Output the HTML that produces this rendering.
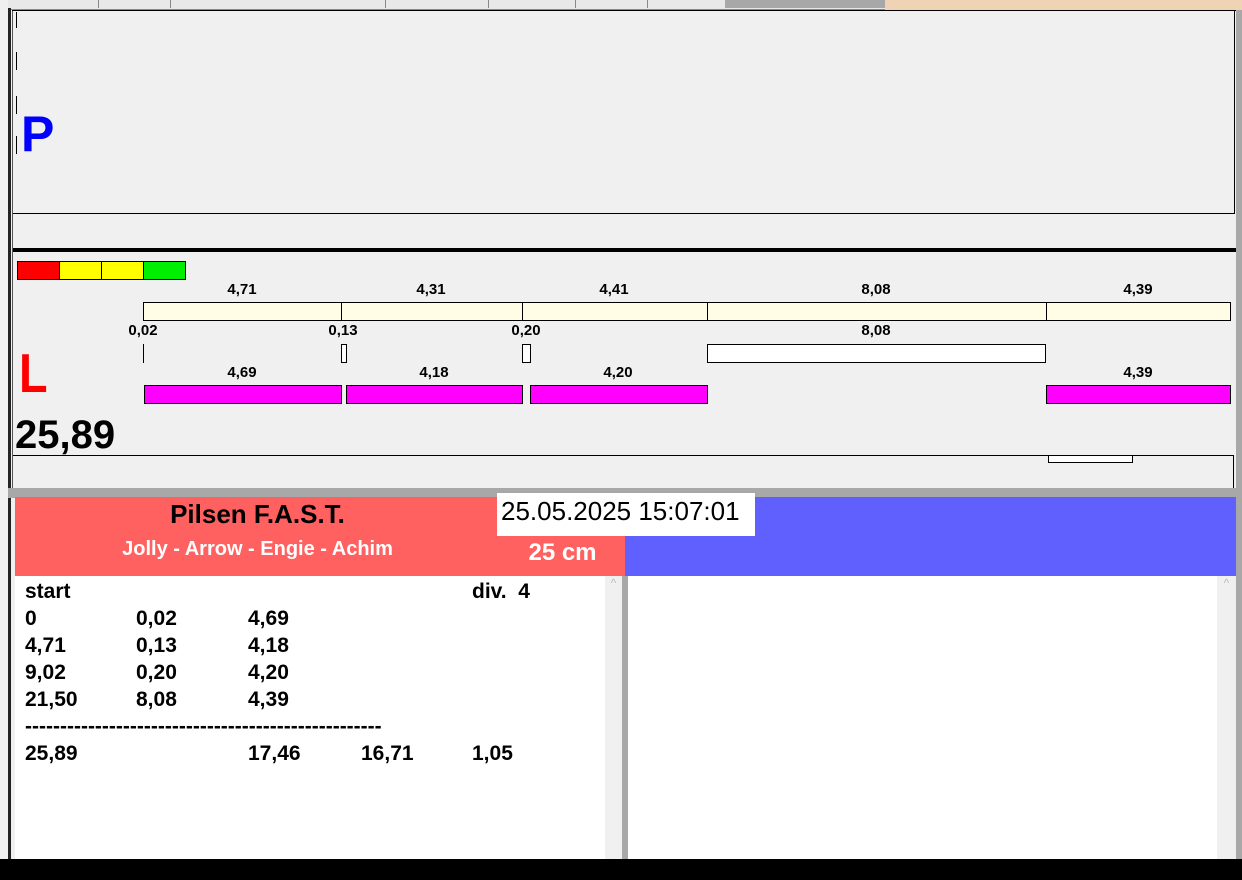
<!DOCTYPE html>
<html><head><meta charset="utf-8"><style>
*{margin:0;padding:0;box-sizing:border-box}
body{width:1242px;height:880px;position:relative;background:#f0f0f0;overflow:hidden;font-family:"Liberation Sans",Arial,sans-serif}
.a{position:absolute}
.n{font-family:"Liberation Sans Narrow","Liberation Sans",sans-serif;font-weight:bold}
.lb{position:absolute;font-size:15px;font-weight:bold;transform:translateX(-50%);white-space:nowrap;line-height:16px}
.bar{position:absolute;border:1px solid #000}
.t{position:absolute;font-size:21px;line-height:27px;color:#000}
</style></head><body>
<div class="a" style="left:0;top:0;width:885px;height:10px;background:#e8e8e8;border-bottom:1px solid #888"></div>
<div class="a" style="left:725px;top:0;width:160px;height:8px;background:#a8a8a8"></div>
<div class="a" style="left:885px;top:0;width:357px;height:11px;background:#f0d2b4"></div>
<div class="a" style="left:98px;top:0;width:1px;height:8px;background:#888"></div>
<div class="a" style="left:170px;top:0;width:1px;height:8px;background:#888"></div>
<div class="a" style="left:385px;top:0;width:1px;height:8px;background:#888"></div>
<div class="a" style="left:488px;top:0;width:1px;height:8px;background:#888"></div>
<div class="a" style="left:575px;top:0;width:1px;height:8px;background:#888"></div>
<div class="a" style="left:647px;top:0;width:1px;height:8px;background:#888"></div>
<div class="a" style="left:0;top:0;width:8px;height:880px;background:#f0f0f0"></div>
<div class="a" style="left:8px;top:8px;width:3px;height:852px;background:#222"></div>
<div class="a" style="left:12px;top:10px;width:1px;height:480px;background:#555"></div>
<div class="a" style="left:1236px;top:10px;width:6px;height:850px;background:#a8a8a8"></div>
<div class="a" style="left:1234px;top:10px;width:1px;height:203px;background:#000"></div>
<div class="a" style="left:12px;top:10px;width:1224px;height:1px;background:#000"></div>
<div class="a" style="left:16px;top:12px;width:1px;height:16px;background:#000"></div>
<div class="a" style="left:16px;top:52px;width:1px;height:18px;background:#000"></div>
<div class="a" style="left:16px;top:96px;width:1px;height:18px;background:#000"></div>
<div class="a" style="left:16px;top:136px;width:1px;height:18px;background:#000"></div>
<div class="a" style="left:21px;top:106px;color:#0000ff;font-size:50px;font-weight:bold;line-height:56px">P</div>
<div class="a" style="left:13px;top:213px;width:1222px;height:1px;background:#000"></div>
<div class="a" style="left:13px;top:248px;width:1223px;height:4px;background:#000"></div>
<div class="bar" style="left:17px;top:261px;width:43px;height:19px;background:#f00"></div>
<div class="bar" style="left:59px;top:261px;width:43px;height:19px;background:#ff0"></div>
<div class="bar" style="left:101px;top:261px;width:43px;height:19px;background:#ff0"></div>
<div class="bar" style="left:143px;top:261px;width:43px;height:19px;background:#0e0"></div>
<div class="lb" style="left:242px;top:282px">4,71</div>
<div class="lb" style="left:431px;top:282px">4,31</div>
<div class="lb" style="left:614px;top:282px">4,41</div>
<div class="lb" style="left:876px;top:282px">8,08</div>
<div class="lb" style="left:1138px;top:282px">4,39</div>
<div class="bar" style="left:143px;top:302px;width:199px;height:19px;background:#fffde6"></div>
<div class="bar" style="left:341px;top:302px;width:182px;height:19px;background:#fffde6"></div>
<div class="bar" style="left:522px;top:302px;width:186px;height:19px;background:#fffde6"></div>
<div class="bar" style="left:707px;top:302px;width:340px;height:19px;background:#fffde6"></div>
<div class="bar" style="left:1046px;top:302px;width:185px;height:19px;background:#fffde6"></div>
<div class="lb" style="left:143px;top:323px">0,02</div>
<div class="lb" style="left:343px;top:323px">0,13</div>
<div class="lb" style="left:526px;top:323px">0,20</div>
<div class="lb" style="left:876px;top:323px">8,08</div>
<div class="a" style="left:143px;top:344px;width:1px;height:19px;background:#000"></div>
<div class="bar" style="left:341px;top:344px;width:6px;height:19px;background:#fff"></div>
<div class="bar" style="left:522px;top:344px;width:9px;height:19px;background:#fff"></div>
<div class="bar" style="left:707px;top:344px;width:339px;height:19px;background:#fff"></div>
<div class="a" style="left:19px;top:343px;color:#f00;font-size:55px;line-height:60px;font-weight:bold;transform:scaleX(0.85);transform-origin:left">L</div>
<div class="lb" style="left:242px;top:365px">4,69</div>
<div class="lb" style="left:434px;top:365px">4,18</div>
<div class="lb" style="left:618px;top:365px">4,20</div>
<div class="lb" style="left:1138px;top:365px">4,39</div>
<div class="bar" style="left:144px;top:385px;width:198px;height:19px;background:#f0f"></div>
<div class="bar" style="left:346px;top:385px;width:177px;height:19px;background:#f0f"></div>
<div class="bar" style="left:530px;top:385px;width:178px;height:19px;background:#f0f"></div>
<div class="bar" style="left:1046px;top:385px;width:185px;height:19px;background:#f0f"></div>
<div class="a" style="left:15px;top:412px;font-size:40px;font-weight:bold;line-height:46px">25,89</div>
<div class="a" style="left:13px;top:455px;width:1221px;height:1px;background:#000"></div>
<div class="a" style="left:1233px;top:455px;width:1px;height:33px;background:#000"></div>
<div class="bar" style="left:1048px;top:455px;width:85px;height:8px;background:#fff"></div>
<div class="a" style="left:8px;top:488px;width:1234px;height:10px;background:#a8a8a8"></div>
<div class="a" style="left:15px;top:497px;width:610px;height:79px;background:#ff6060"></div>
<div class="a" style="left:625px;top:497px;width:611px;height:79px;background:#6060ff"></div>
<div class="a n" style="left:15px;top:497px;width:485px;text-align:center;font-size:26px;line-height:34px">Pilsen F.A.S.T.</div>
<div class="a n" style="left:15px;top:537px;width:485px;text-align:center;font-size:20px;line-height:24px;color:#fff">Jolly - Arrow - Engie - Achim</div>
<div class="a n" style="left:500px;top:538px;width:125px;text-align:center;font-size:24px;line-height:30px;color:#fff">25 cm</div>
<div class="a" style="left:497px;top:493px;width:258px;height:43px;background:#fff;font-family:'Liberation Sans',sans-serif;font-size:26px;line-height:34px;padding-left:4px;padding-top:1px">25.05.2025 15:07:01</div>
<div class="a" style="left:15px;top:576px;width:590px;height:284px;background:#fff"></div>
<div class="a" style="left:605px;top:576px;width:17px;height:284px;background:#f0f0f0;color:#bbb;font-size:12px;text-align:center">^</div>
<div class="a" style="left:622px;top:576px;width:6px;height:284px;background:#a8a8a8"></div>
<div class="a" style="left:628px;top:576px;width:589px;height:284px;background:#fff"></div>
<div class="a" style="left:1217px;top:576px;width:19px;height:284px;background:#f0f0f0;color:#bbb;font-size:12px;text-align:center">^</div>
<div class="t n" style="left:25px;top:578px">start<br>0<br>4,71<br>9,02<br>21,50<br>---------------------------------------------------<br>25,89</div>
<div class="t n" style="left:136px;top:605px">0,02<br>0,13<br>0,20<br>8,08</div>
<div class="t n" style="left:248px;top:605px">4,69<br>4,18<br>4,20<br>4,39<br><br>17,46</div>
<div class="t n" style="left:361px;top:740px">16,71</div>
<div class="t n" style="left:472px;top:578px">div.&nbsp; 4</div>
<div class="t n" style="left:472px;top:740px">1,05</div>
<div class="a" style="left:0;top:859px;width:1242px;height:21px;background:#000"></div>
</body></html>
